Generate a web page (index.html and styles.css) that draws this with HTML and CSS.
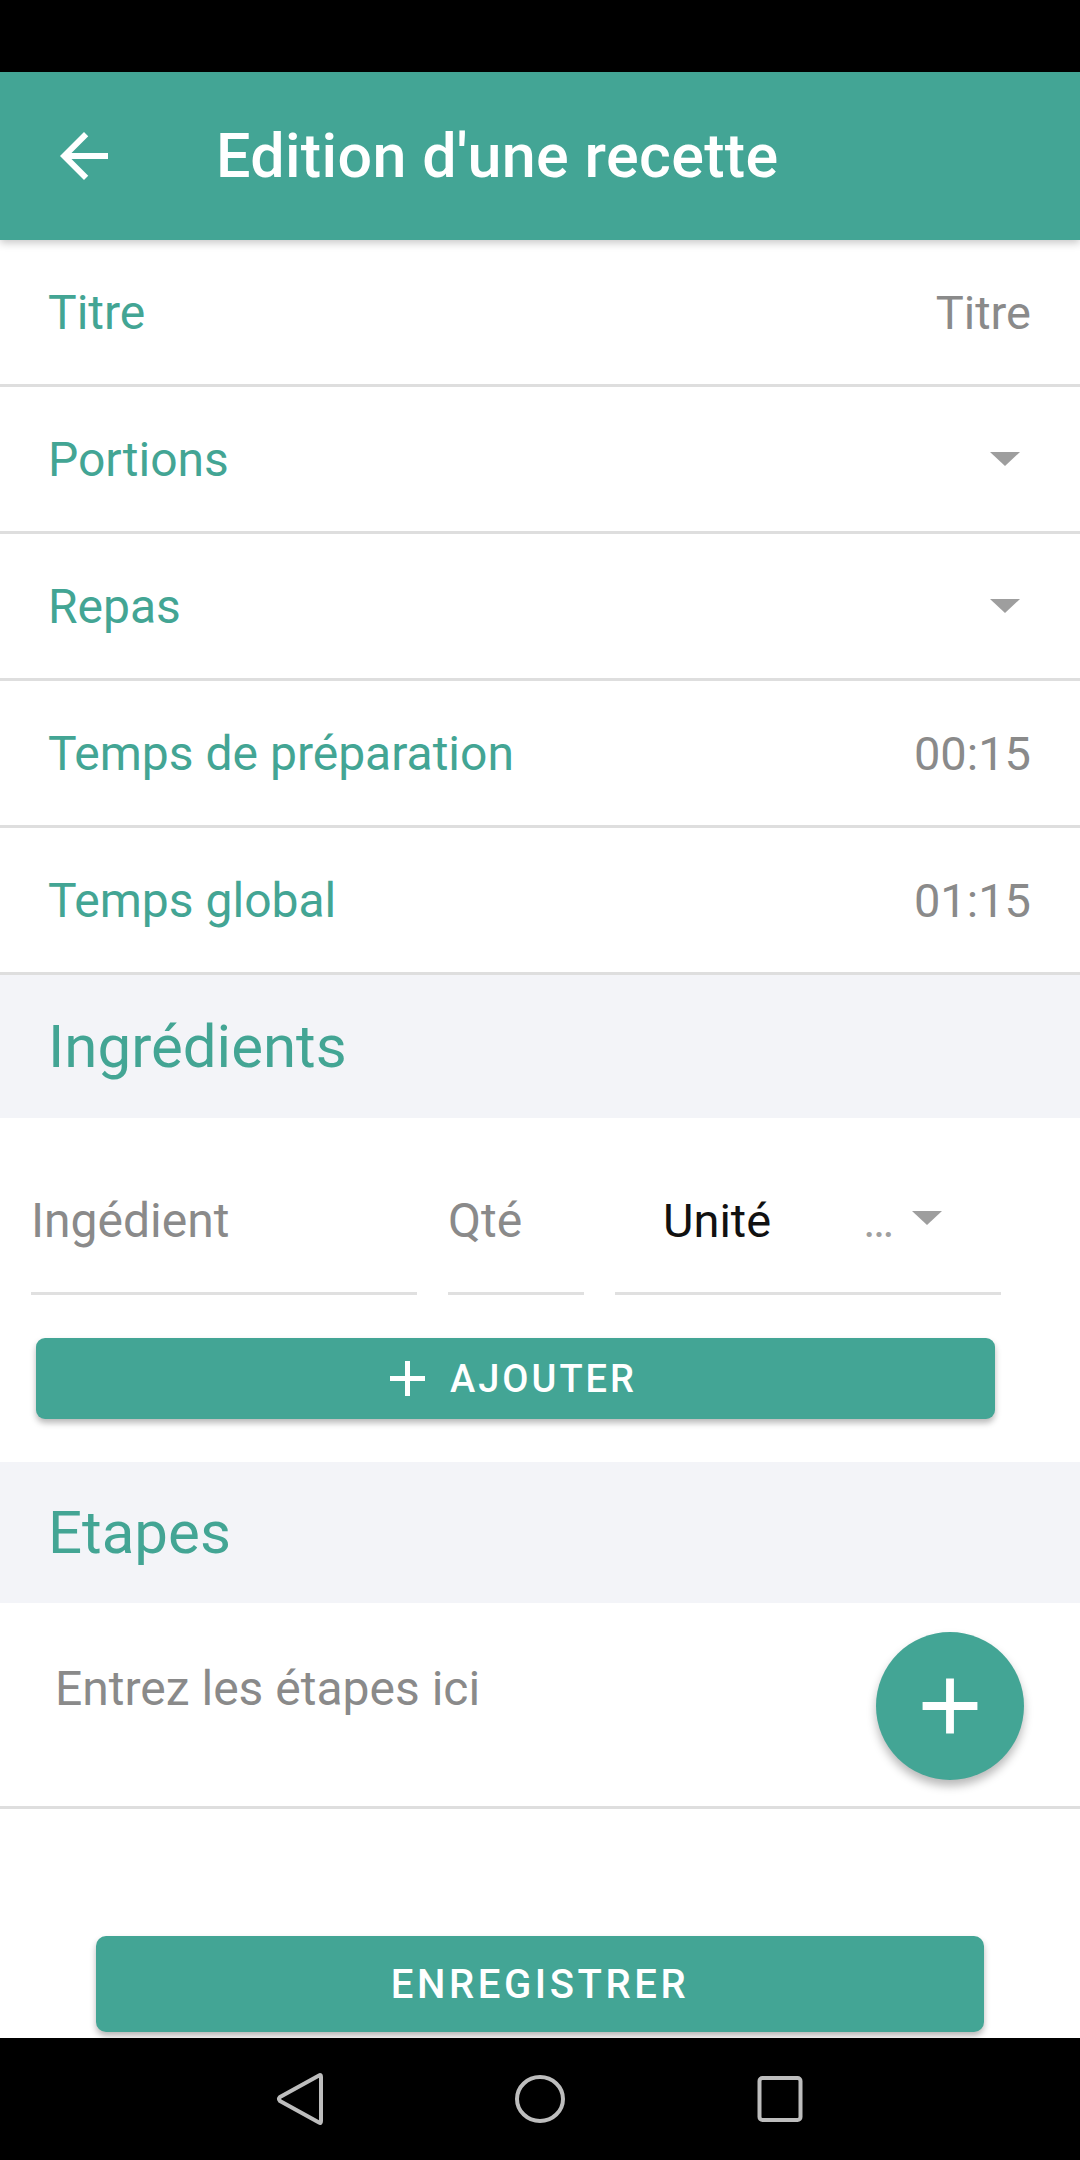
FILE: index.html
```html
<!DOCTYPE html>
<html lang="fr">
<head>
<meta charset="utf-8">
<title>Edition d'une recette</title>
<link rel="stylesheet" href="styles.css">
</head>
<body>
<div class="screen">
  <div class="status"></div>
  <header class="appbar">
    <svg class="back" viewBox="0 0 24 24" width="72" height="72"><path d="M20 11H7.83l5.59-5.59L12 4l-8 8 8 8 1.41-1.41L7.83 13H20v-2z" fill="#fff"/></svg>
    <h1 class="title">Edition d'une recette</h1>
  </header>
  <main class="content">
    <div class="row"><span class="label">Titre</span><span class="value">Titre</span></div>
    <div class="row"><span class="label">Portions</span><svg class="caret" viewBox="0 0 30 14" width="30" height="14"><path d="M0 0h30L15 14z" fill="#9e9e9e"/></svg></div>
    <div class="row"><span class="label">Repas</span><svg class="caret" viewBox="0 0 30 14" width="30" height="14"><path d="M0 0h30L15 14z" fill="#9e9e9e"/></svg></div>
    <div class="row"><span class="label">Temps de préparation</span><span class="value">00:15</span></div>
    <div class="row"><span class="label">Temps global</span><span class="value">01:15</span></div>

    <div class="section-head head-ing">Ingrédients</div>
    <div class="ingredients">
      <div class="fields">
        <div class="field f-name"><span class="ph">Ingédient</span></div>
        <div class="field f-qty"><span class="ph">Qté</span></div>
        <div class="field f-unit"><span class="unit">Unité</span><span class="dots">…</span><svg class="ucaret" viewBox="0 0 30 14" width="30" height="14"><path d="M0 0h30L15 14z" fill="#9e9e9e"/></svg></div>
      </div>
      <button class="btn btn-add"><svg viewBox="5 5 14 14" width="35" height="35"><path d="M19 13h-6v6h-2v-6H5v-2h6V5h2v6h6v2z" fill="#fff"/></svg><span>AJOUTER</span></button>
    </div>

    <div class="section-head">Etapes</div>
    <div class="steps">
      <span class="ph">Entrez les étapes ici</span>
      <button class="fab"><svg viewBox="0 0 24 24" width="94" height="94"><path d="M19 13h-6v6h-2v-6H5v-2h6V5h2v6h6v2z" fill="#fff"/></svg></button>
    </div>

    <div class="footer">
      <button class="btn btn-save">ENREGISTRER</button>
    </div>
  </main>
  <nav class="navbar">
    <svg viewBox="0 0 60 60" width="60" height="60"><path d="M49 6.5 Q51 5 51 8 V52 Q51 55 49 53.5 L10 32 Q8 30 10 28 Z" fill="none" stroke="#bdbdbd" stroke-width="4" stroke-linejoin="round"/></svg>
    <svg viewBox="0 0 60 60" width="60" height="60"><ellipse cx="30" cy="30" rx="23" ry="22" fill="none" stroke="#bdbdbd" stroke-width="4"/></svg>
    <svg viewBox="0 0 60 60" width="60" height="60"><rect x="9.5" y="9" width="41" height="42" rx="3" fill="none" stroke="#bdbdbd" stroke-width="4"/></svg>
  </nav>
</div>
</body>
</html>
```

FILE: styles.css
```css
* { box-sizing: border-box; }
html, body { margin: 0; padding: 0; background: #fff; }
body { font-family: Roboto, "Noto Sans", "Liberation Sans", sans-serif; }

.screen {
  width: 1080px;
  height: 2160px;
  display: flex;
  flex-direction: column;
  overflow: hidden;
}

.status { height: 72px; background: #000; flex: none; }

.appbar {
  height: 168px;
  flex: none;
  background: #43a595;
  display: flex;
  align-items: center;
  padding-left: 48px;
  position: relative;
  z-index: 2;
  box-shadow: 0 3px 8px rgba(0,0,0,0.22);
}
.back { flex: none; }
.title {
  margin: 0 0 0 96px;
  font-size: 61px;
  font-weight: 500;
  color: #fff;
  letter-spacing: 0.35px;
}

.content {
  flex: 1;
  display: flex;
  flex-direction: column;
  min-height: 0;
}

.row {
  height: 147px;
  flex: none;
  border-bottom: 3px solid #dedede;
  display: flex;
  align-items: center;
  justify-content: space-between;
  padding: 0 49px 0 48px;
}
.label { font-size: 48px; color: #43a594; }
.value { font-size: 47px; color: #8a8a8a; }
.caret { margin-right: 11px; }

.section-head {
  flex: none;
  height: 141px;
  background: #f3f4f8;
  color: #43a594;
  font-size: 60px;
  display: flex;
  align-items: center;
  padding-left: 48px;
}
.head-ing { height: 143px; }

.ingredients {
  flex: none;
  height: 344px;
  padding-top: 60px;
}
.fields {
  display: flex;
  padding-left: 31px;
  gap: 31px;
}
.field {
  height: 117px;
  padding-top: 15px;
  border-bottom: 3px solid #e0e0e0;
  font-size: 47px;
  line-height: 56px;
}
.f-name { width: 386px; }
.f-qty { width: 136px; }
.f-unit {
  width: 386px;
  display: flex;
  align-items: baseline;
  padding-left: 48px;
  padding-right: 59px;
}
.ph { color: #8a8a8a; font-size: 48px; }
.unit { color: #111; }
.dots { margin-left: auto; font-size: 46px; color: #a0a0a0; line-height: 56px; }
.ucaret { align-self: flex-start; margin-top: 18px; margin-left: 18px; }

.btn {
  border: none;
  background: #43a595;
  color: #fff;
  font-family: Roboto, "Noto Sans", sans-serif;
  font-weight: 500;
  font-size: 38px;
  letter-spacing: 3px;
  border-radius: 9px;
  box-shadow: 0 4px 6px rgba(0,0,0,0.28);
  display: flex;
  align-items: center;
  justify-content: center;
  padding: 0;
}
.btn-add {
  margin: 43px 0 0 36px;
  width: 959px;
  height: 81px;
  padding-right: 4px;
}
.btn-add svg { margin-right: 25px; }

.steps {
  flex: none;
  height: 206px;
  border-bottom: 3px solid #dedede;
  padding: 58px 0 0 55px;
  position: relative;
  line-height: 56px;
}
.fab {
  position: absolute;
  left: 876px;
  top: 29px;
  width: 148px;
  height: 148px;
  border-radius: 50%;
  border: none;
  background: #43a595;
  box-shadow: 0 6px 10px rgba(0,0,0,0.28);
  display: flex;
  align-items: center;
  justify-content: center;
  padding: 0;
}

.footer {
  margin-top: auto;
  padding-bottom: 6px;
  display: flex;
  justify-content: center;
}
.btn-save {
  width: 888px;
  height: 96px;
  border-radius: 10px;
  font-size: 40px;
  letter-spacing: 3.6px;
}

.navbar {
  height: 122px;
  flex: none;
  background: #000;
  display: flex;
  align-items: center;
  justify-content: center;
  gap: 180px;
}
```
